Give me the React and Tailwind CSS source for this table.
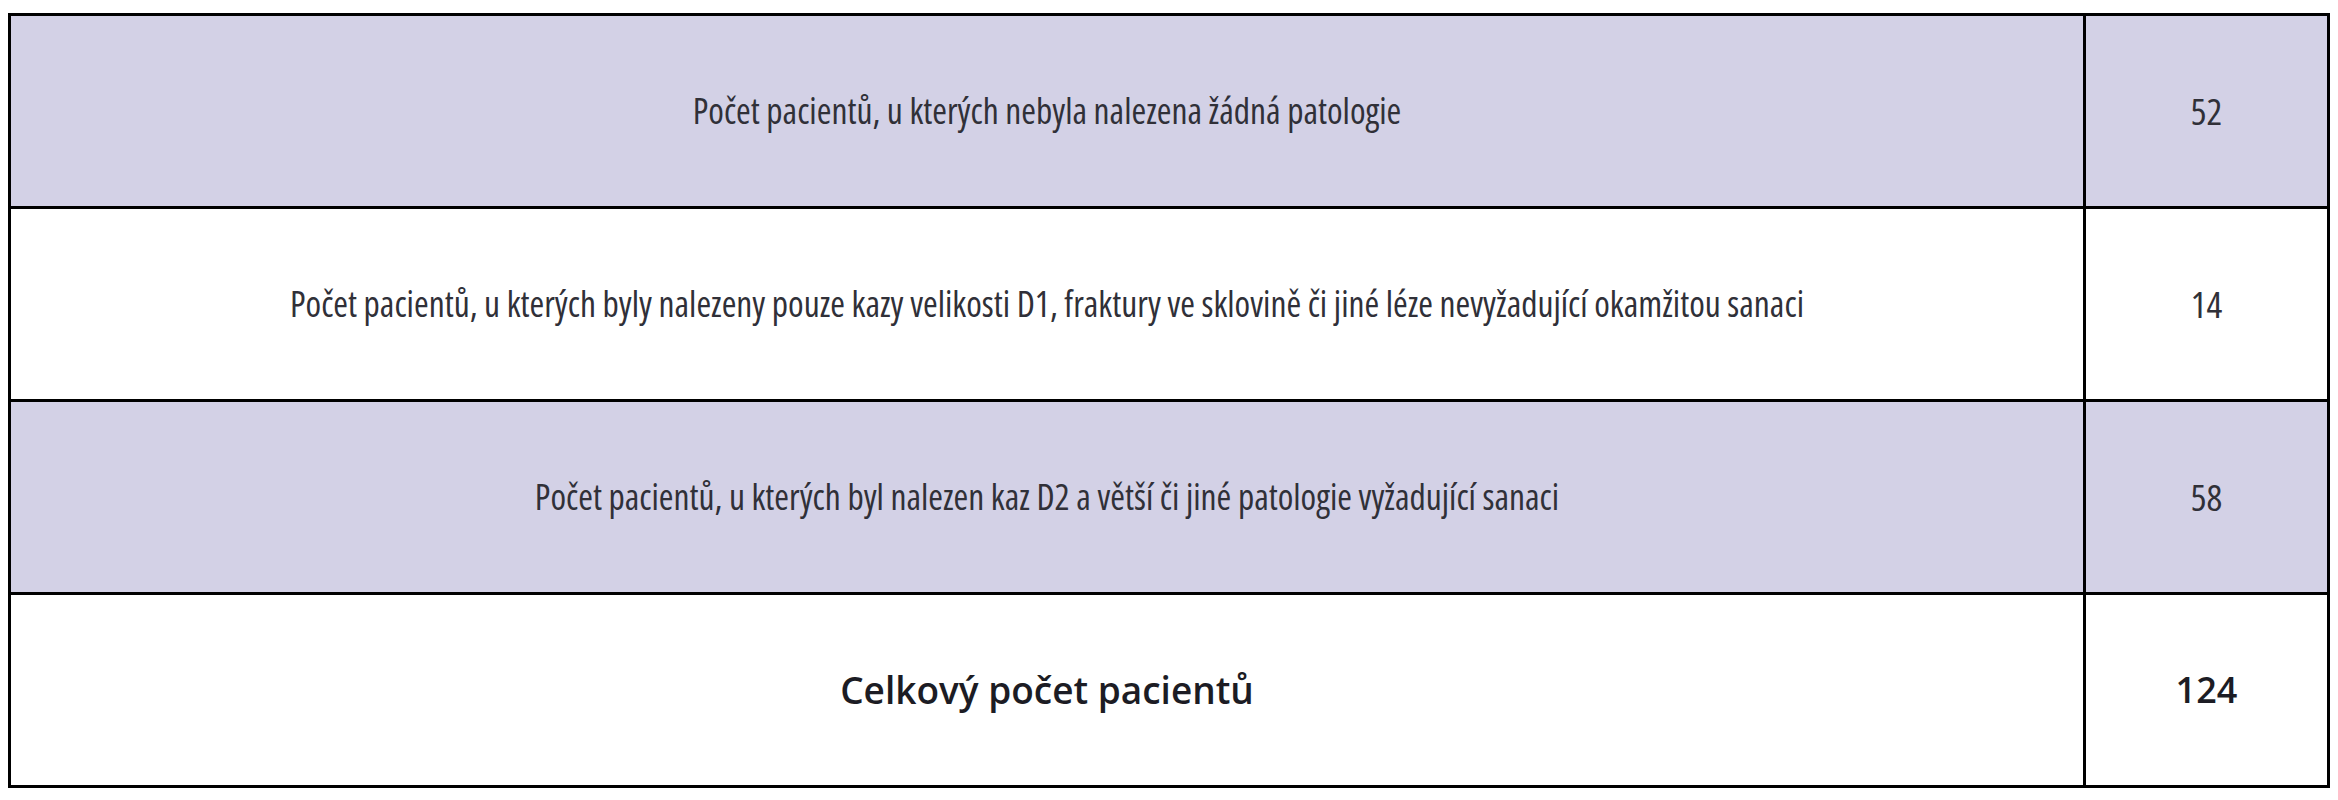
const rows = [
  {
    label: "Počet pacientů, u kterých nebyla nalezena žádná patologie",
    value: "52",
    shaded: true,
  },
  {
    label:
      "Počet pacientů, u kterých byly nalezeny pouze kazy velikosti D1, fraktury ve sklovině či jiné léze nevyžadující okamžitou sanaci",
    value: "14",
    shaded: false,
  },
  {
    label: "Počet pacientů, u kterých byl nalezen kaz D2 a větší či jiné patologie vyžadující sanaci",
    value: "58",
    shaded: true,
  },
];

export default function App() {
  return (
    <div className="min-h-[800px] w-[2338px] bg-white pl-[8px] pt-[13px] font-['Open_Sans',sans-serif] text-[#303038]">
      <table className="w-[2322px] border-collapse border-[3px] border-black">
        <tbody>
          {rows.map((row) => (
            <tr key={row.value} className={row.shaded ? "bg-[#d3d1e6]" : "bg-white"}>
              <td className="h-[193px] border-[3px] border-black text-center text-[35.5px] font-normal [font-stretch:75%]">
                {row.label}
              </td>
              <td className="h-[193px] w-[244px] border-[3px] border-black text-center text-[37px] font-normal [font-stretch:75%]">
                {row.value}
              </td>
            </tr>
          ))}
          <tr className="bg-white">
            <td className="h-[193px] border-[3px] border-black text-center text-[37px] font-semibold text-[#1c1c24]">
              Celkový počet pacientů
            </td>
            <td className="h-[193px] w-[244px] border-[3px] border-black text-center text-[36px] font-semibold text-[#1c1c24]">
              124
            </td>
          </tr>
        </tbody>
      </table>
    </div>
  );
}
